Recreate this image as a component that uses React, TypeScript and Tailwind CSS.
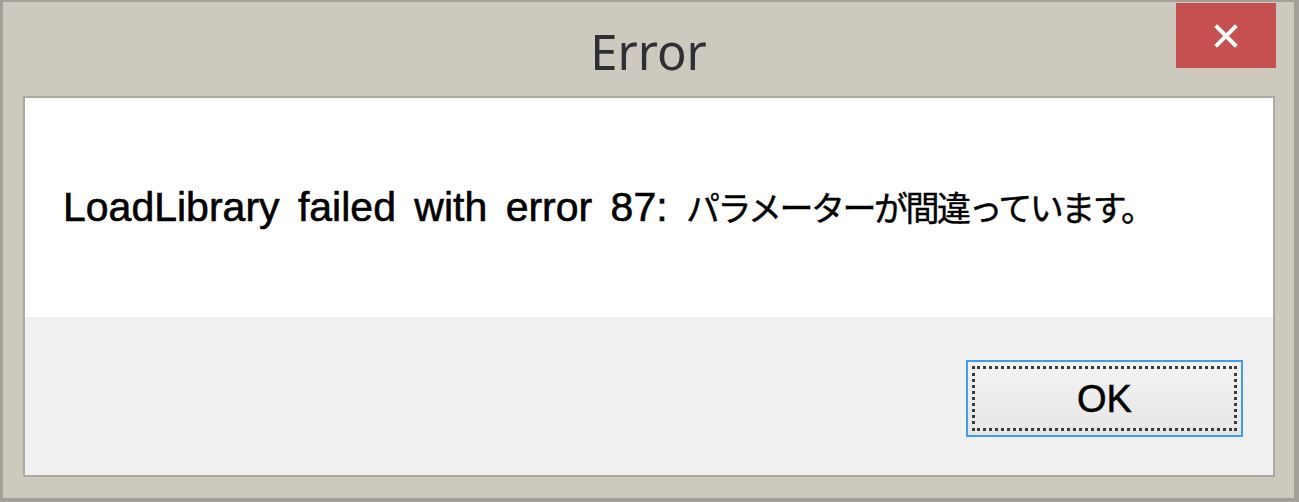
export default function App() {
  return (
    <div className="flex h-[502px] w-[1299px] flex-col border-b-[4px] border-l-[3px] border-r-[5px] border-t-[2px] border-[#a4a098] bg-[#cdc9bf]">
      {/* title bar */}
      <div className="grid h-[94px] shrink-0 grid-cols-[1fr_auto_1fr] items-start">
        <div />
        <div
          className="pt-[25px] text-[49px] leading-none text-[#2f3033]"
          style={{ fontFamily: '"Noto Sans", "Open Sans", sans-serif' }}
        >
          Error
        </div>
        <div className="flex justify-end pr-[18px] pt-[1px]">
          <button className="flex h-[65px] w-[100px] items-center justify-center bg-[#c75050]">
            <svg width="26" height="26" viewBox="0 0 26 26">
              <path
                d="M4 4 L22 22 M22 4 L4 22"
                stroke="#ffffff"
                strokeWidth="4"
                strokeLinecap="square"
              />
            </svg>
          </button>
        </div>
      </div>

      {/* client area */}
      <div className="mb-[21px] ml-[20px] mr-[19px] flex flex-1 flex-col border-2 border-[#aeaaa1]">
        <div className="flex h-[219px] shrink-0 items-center bg-white pl-[38px]">
          <p
            className="whitespace-nowrap text-[41px] leading-none text-black [-webkit-text-stroke:0.6px_#000] [word-spacing:7px]"
            style={{ fontFamily: '"Liberation Sans", Arial, sans-serif' }}
          >
            LoadLibrary failed with error 87:{" "}
            <span
              className="text-[34px] tracking-[-2.5px] [-webkit-text-stroke:0.4px_#000] [word-spacing:0px]"
              style={{
                fontFamily: '"Noto Sans CJK JP", "Noto Sans CJK SC", sans-serif',
              }}
            >
              パラメーターが間違っています。
            </span>
          </p>
        </div>
        <div className="flex flex-1 items-start justify-end bg-[#f0f0f0] pr-[30px] pt-[43px]">
          <button className="h-[77px] w-[277px] border-2 border-[#3c9cf2] bg-gradient-to-b from-[#f3f3f3] to-[#e6e6e6] p-[4px]">
            <div
              className="flex h-full w-full items-center justify-center border-[3px] border-dotted border-[#3a3a3a] text-[38px] leading-none text-black [-webkit-text-stroke:0.5px_#000]"
              style={{ fontFamily: '"Liberation Sans", Arial, sans-serif' }}
            >
              OK
            </div>
          </button>
        </div>
      </div>
    </div>
  );
}
